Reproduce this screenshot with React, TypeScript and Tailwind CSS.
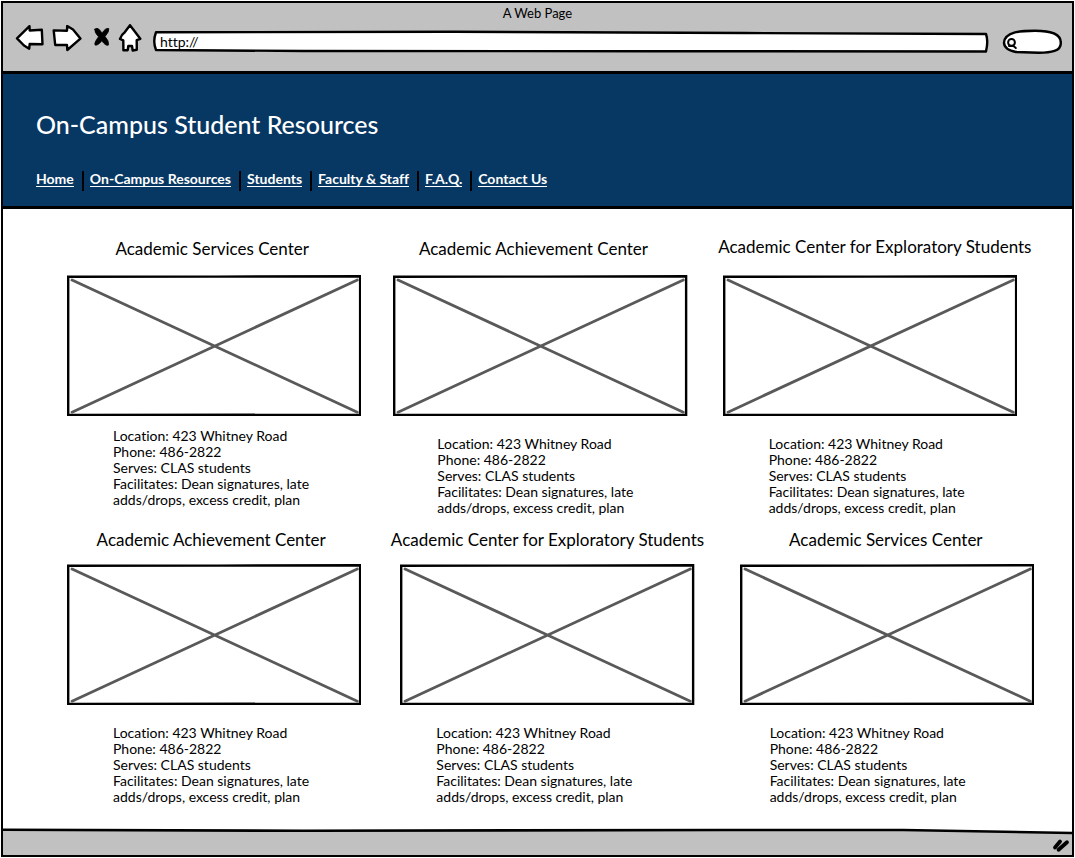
import type { ReactNode } from "react";

const NAV = ["Home", "On-Campus Resources", "Students", "Faculty & Staff", "F.A.Q.", "Contact Us"];

type Center = { name: string; card: string; heading: string; details: string };

const TOP_ROW: Center[] = [
  { name: "Academic Services Center", card: "", heading: "pb-3.5 pr-1", details: "pt-3 pl-[46px]" },
  { name: "Academic Achievement Center", card: "ml-8", heading: "pb-3.5 pr-3.5", details: "pt-5 pl-11" },
  { name: "Academic Center for Exploratory Students", card: "ml-[35px]", heading: "pb-4 pl-2.5", details: "pt-5 pl-[46px]" },
];

const BOTTOM_ROW: Center[] = [
  { name: "Academic Achievement Center", card: "", heading: "pb-3 pr-1.5", details: "pt-5 pl-[46px]" },
  { name: "Academic Center for Exploratory Students", card: "ml-[39px]", heading: "pb-3", details: "pt-5 pl-9" },
  { name: "Academic Services Center", card: "ml-[45px]", heading: "pb-3 pr-0.5", details: "pt-5 pl-[30px]" },
];

const DETAILS = [
  "Location: 423 Whitney Road",
  "Phone: 486-2822",
  "Serves: CLAS students",
  "Facilitates: Dean signatures, late",
  "adds/drops, excess credit, plan",
];

function Sketch({ box, className, children }: { box: string; className: string; children: ReactNode }) {
  return (
    <svg viewBox={box} className={className} fill="white" stroke="black" strokeWidth="2.4" strokeLinejoin="round" strokeLinecap="round" aria-hidden="true">
      {children}
    </svg>
  );
}

function BrowserBar() {
  return (
    <header className="h-[71px] border-b-[3px] border-black bg-[#c1c1c1]">
      <p className="text-center text-[13px] leading-5">A Web Page</p>
      <div className="flex items-center pr-2 pl-3">
        <button type="button" aria-label="Back" className="mr-[7px]">
          <Sketch box="15 24 30 28" className="h-7 w-[30px]">
            <path d="M17 37.3 L29.5 25.2 L29.7 29.5 L41.8 28.8 L42.5 43.2 L29.7 43 L29.2 47.7 L24 44.5 Z" />
          </Sketch>
        </button>
        <button type="button" aria-label="Forward" className="mr-2">
          <Sketch box="52 24 30 28" className="h-7 w-[30px]">
            <path d="M53.7 29.4 L67 29.7 L67.2 25 L73 28.5 L80.4 37.6 L67.3 49 L67 44 L55.2 44 Z" />
          </Sketch>
        </button>
        <button type="button" aria-label="Stop" className="mr-2">
          <Sketch box="90 24 20 28" className="h-7 w-5">
            <path d="M94.8 28.2 Q97 26.3 99.3 28.5 L102.2 32.2 Q105 26.8 108.8 27.5 Q109.5 30.5 105 35.5 Q109.2 40 108.5 44 Q106 45.5 101.8 39.8 Q97.8 45 95 44 Q94 41.5 98.6 35.8 Q94.3 31.5 94.8 28.2 Z" fill="black" strokeWidth="0.8" />
          </Sketch>
        </button>
        <button type="button" aria-label="Home page" className="mr-2">
          <Sketch box="118 23 25 30" className="h-[30px] w-[25px]">
            <path d="M130 24.2 L140.3 37.8 L136.7 39.2 L136.8 48.8 L132.7 49.5 L132 45 L128.3 45 L127.7 49.2 L123.4 49.3 L123.3 39.3 L120 38 Q121.5 33.5 124.5 31.5 Z" />
          </Sketch>
        </button>
        <div className="relative mt-1 ml-0.5 h-6 min-w-0 flex-1">
          <svg viewBox="0 0 836 24" preserveAspectRatio="none" className="absolute inset-0 h-full w-full" aria-hidden="true">
            <path d="M3 3.3 L300 2.8 L590 4 L832 5 Q834.5 12 832 22.5 L500 22.2 L150 22 L3 21 Q-0.5 12.5 3 3.3 Z" fill="white" stroke="black" strokeWidth="2.4" strokeLinejoin="round" vectorEffect="non-scaling-stroke" />
          </svg>
          <input type="text" aria-label="Address" defaultValue="http://" className="relative block h-full w-full bg-transparent pl-[7px] text-sm leading-6 outline-none" />
        </div>
        <div className="relative mt-1 ml-3 h-7 w-[62px]">
          <svg viewBox="1002 26 62 28" className="absolute inset-0 h-full w-full" fill="white" stroke="black" strokeWidth="2.4" strokeLinecap="round" aria-hidden="true">
            <path d="M1004 41.5 C1005 31 1020 29.7 1035 29.7 C1048 29.7 1060.5 32 1060.7 41 C1062 50.5 1050 51.8 1039 51.8 L1016 51 C1008 49.5 1004 47 1004 41.5 Z" />
            <circle cx="1011.5" cy="41.4" r="3.4" strokeWidth="2" />
            <path d="M1009 45 L1013.5 45 L1015.8 47" strokeWidth="2" />
          </svg>
          <input type="search" aria-label="Search" className="relative block h-full w-full bg-transparent pr-3 pl-4 text-[13px] outline-none" />
        </div>
      </div>
    </header>
  );
}

function CenterCard({ center }: { center: Center }) {
  return (
    <article className={`min-w-0 flex-1 ${center.card}`}>
      <h2 className={`flex h-[42px] items-end justify-center text-[17px] leading-6 whitespace-nowrap ${center.heading}`}>{center.name}</h2>
      <svg viewBox="0 0 294 141" className="block h-auto w-full" fill="none" role="img" aria-label={center.name}>
        <path d="M1.2 1.8 L150 1.6 L292.8 1.2 L292.8 139.6 L1.2 139.8 Z" stroke="black" strokeWidth="2.4" />
        <path d="M5 5 L290 137 M290 5 L5 137" stroke="#595959" strokeWidth="2.8" strokeLinecap="round" />
      </svg>
      <div className={`text-sm leading-4 whitespace-nowrap ${center.details}`}>
        {DETAILS.map((line) => (
          <p key={line}>{line}</p>
        ))}
      </div>
    </article>
  );
}

export default function App() {
  return (
    <div className="flex min-h-screen flex-col bg-white p-px font-['Lato',sans-serif] text-black [font-variant-ligatures:none]">
      <div className="flex flex-1 flex-col border-2 border-black">
        <BrowserBar />
        <div className="border-b-[3px] border-black bg-[#073763] px-[33px] pt-[34px] pb-[15px] text-white">
          <h1 className="text-[25px] leading-8 font-medium">On-Campus Student Resources</h1>
          <nav className="mt-[31px]">
            <ul className="flex items-center text-sm leading-[19px] font-bold">
              {NAV.map((label, i) => (
                <li key={label} className={i > 0 ? "ml-2 border-l-2 border-black pl-1.5" : ""}>
                  <a href="#" className="block pb-1">
                    <span className="block border-b border-white leading-[15px]">{label}</span>
                  </a>
                </li>
              ))}
            </ul>
          </nav>
        </div>
        <main className="flex-1">
          <section className="flex pt-6 pr-[55px] pl-16">
            {TOP_ROW.map((center) => (
              <CenterCard key={center.name} center={center} />
            ))}
          </section>
          <section className="flex pt-1.5 pr-[38px] pl-16">
            {BOTTOM_ROW.map((center) => (
              <CenterCard key={center.name} center={center} />
            ))}
          </section>
        </main>
        <footer className="relative flex h-[27px] items-end justify-end">
          <svg viewBox="0 0 1069 27" preserveAspectRatio="none" className="absolute inset-0 h-full w-full" aria-hidden="true">
            <path d="M0 1.8 L300 2.8 L720 2 L900 2 L1069 5 L1069 27 L0 27 Z" fill="#c1c1c1" />
            <path d="M0 1.8 L300 2.8 L720 2 L900 2 L1069 5" fill="none" stroke="black" strokeWidth="2.6" vectorEffect="non-scaling-stroke" />
          </svg>
          <svg viewBox="0 0 18 16" className="relative mr-0.5 mb-0.5 h-4 w-[18px]" stroke="black" strokeWidth="3.8" strokeLinecap="round" aria-hidden="true">
            <path d="M3 10.5 L8 4.5 M6.5 12.7 L15 5.3" />
          </svg>
        </footer>
      </div>
    </div>
  );
}
